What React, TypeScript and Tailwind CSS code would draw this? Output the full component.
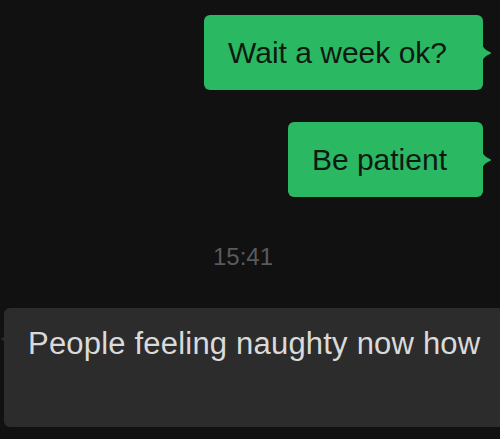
const FONT = "font-['Liberation_Sans',Arial,sans-serif]";

function Tail({ side, color }: { side: "left" | "right"; color: string }) {
  // small pointed tail on the bubble edge
  const isRight = side === "right";
  return (
    <svg
      width="10"
      height="18"
      viewBox="0 0 10 18"
      className={`absolute top-1/2 -translate-y-1/2 ${isRight ? "-right-[9px]" : "-left-[4px]"}`}
    >
      {isRight ? (
        <path d="M0 0 C1 4 4 6.5 8.5 8.2 Q9.6 9 8.5 9.8 C4 11.5 1 14 0 18 Z" fill={color} />
      ) : (
        <path d="M10 0 C9 4 6 6.5 1.5 8.2 Q0.4 9 1.5 9.8 C6 11.5 9 14 10 18 Z" fill={color} />
      )}
    </svg>
  );
}

function Outgoing({ text }: { text: string }) {
  return (
    <div className="flex justify-end pr-[17px]">
      <div className="relative h-[75px] flex items-center rounded-[6px] bg-[#2bb863] pl-6 pr-9">
        <span className="text-[30px] leading-[36px] text-[#0f1a13]">{text}</span>
        <Tail side="right" color="#2bb863" />
      </div>
    </div>
  );
}

export default function App() {
  return (
    <div className={`w-[500px] h-[439px] overflow-hidden bg-[#111111] ${FONT}`}>
      <div className="flex flex-col pt-[15px]">
        <Outgoing text="Wait a week ok?" />
        <div className="h-8" />
        <Outgoing text="Be patient" />

        {/* timestamp */}
        <div className="mt-[48px] text-center text-[24px] leading-[24px] text-[#5a5a5a] pr-[14px]">
          15:41
        </div>

        {/* incoming */}
        <div className="mt-[39px] pl-[4px]">
          <div className="relative w-[520px] h-[119px] rounded-[6px] bg-[#2c2c2c] pl-6 pt-[18px]">
            <span className="text-[31px] leading-[36px] tracking-[0.2px] text-[#dadada]">
              People feeling naughty now how
            </span>
            <svg width="10" height="18" viewBox="0 0 10 18" className="absolute -left-[4px] top-[22px]">
              <path d="M10 0 C9 4 6 6.5 1.5 8.2 Q0.4 9 1.5 9.8 C6 11.5 9 14 10 18 Z" fill="#2c2c2c" />
            </svg>
          </div>
        </div>
      </div>
    </div>
  );
}
